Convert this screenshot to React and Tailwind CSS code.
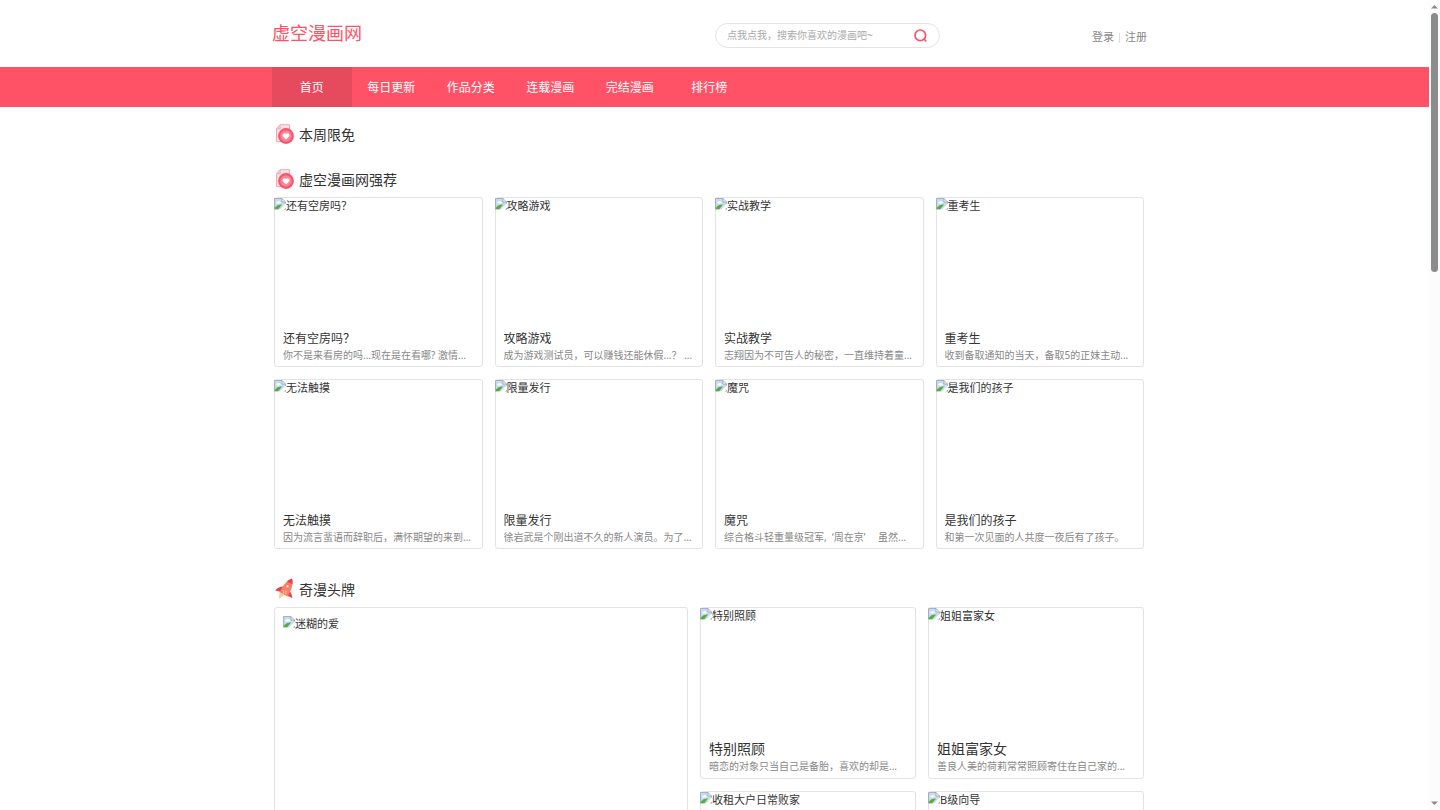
import React from "react";

const NAV = ["首页", "每日更新", "作品分类", "连载漫画", "完结漫画", "排行榜"];

const RECOMMENDED = [
  { title: "还有空房吗？", desc: "你不是来看房的吗...现在是在看哪? 激情..." },
  { title: "攻略游戏", desc: "成为游戏测试员，可以赚钱还能休假...？ ..." },
  { title: "实战教学", desc: "志翔因为不可告人的秘密，一直维持着童..." },
  { title: "重考生", desc: "收到备取通知的当天，备取5的正妹主动..." },
  { title: "无法触摸", desc: "因为流言蜚语而辞职后，满怀期望的来到..." },
  { title: "限量发行", desc: "徐岩武是个刚出道不久的新人演员。为了..." },
  { title: "魔咒", desc: "综合格斗轻重量级冠军,  ‘周在京’　 虽然..." },
  { title: "是我们的孩子", desc: "和第一次见面的人共度一夜后有了孩子。" },
];

const FEATURED = [
  { title: "特别照顾", desc: "暗恋的对象只当自己是备胎，喜欢的却是..." },
  { title: "姐姐富家女", desc: "善良人美的荷莉常常照顾寄住在自己家的..." },
  { title: "收租大户日常败家", desc: "" },
  { title: "B级向导", desc: "" },
];

function BrokenImageIcon() {
  return (
    <svg className="h-3 w-3 shrink-0" viewBox="0 0 12 12" aria-hidden="true">
      <path d="M.5.5h7.500l3.500 3.500v7.500H.5z" fill="#c5daf3" />
      <path d="M2.300 4.800c0-.9.700-1.400 1.400-1.300.5-.9 2.100-.8 2.400.3.900.2.900 1.500 0 1.600H3c-.4 0-.7-.2-.7-.6z" fill="#fff" />
      <path d="M.7 11.300V9.800C2.500 7.500 5 6.300 8 6.500L4.300 11.300z" fill="#56ad3c" />
      <path d="M7.800 11.300 11.300 7.500v3.800z" fill="#56ad3c" />
      <path d="M8 .5V4h3.500z" fill="#fff" />
      <path d="M.5 11.500V.5H8L11.500 4v7.500M8 .5V4h3.500" fill="none" stroke="#9aa3ad" strokeWidth=".8" />
      <path d="M4.800 12.500 12.500 4.800V9L9 12.500z" fill="#fff" />
    </svg>
  );
}

function HeartPageIcon() {
  return (
    <svg className="h-5 w-5 shrink-0" viewBox="0 0 20 20" aria-hidden="true">
      <path d="M5 .7h9.500v17H1.500V4.500z" fill="#ffe3e5" stroke="#f9a3ae" strokeWidth="1" />
      <path d="M1.500 4.700h3.700V.7" fill="#ffc4cb" stroke="#f9a3ae" strokeWidth=".8" />
      <circle cx="11" cy="12" r="7.900" fill="#f7536d" />
      <circle cx="11" cy="12" r="5.800" fill="#fa8596" />
      <path d="M11 15.600 7.900 12.400a2 2 0 0 1 3.100-2.500 2 2 0 0 1 3.100 2.500z" fill="#fff" />
    </svg>
  );
}

function RocketIcon() {
  return (
    <svg className="h-[22px] w-5 shrink-0" viewBox="0 0 20 22" aria-hidden="true">
      <path d="M4.500 14 3.800 21l5.500-4z" fill="#f6cf9d" />
      <path d="M8.500 8.500C5 8.500 2 10 .3 12.500L6 14zM14 12c2 2.500 3.300 5 3.200 8L9.500 16.500z" fill="#ea4350" />
      <path d="M17 .5C11.500 2.500 7.500 7.500 5 14.500l7.500 4C16.500 12.500 18.500 6.500 17 .5z" fill="#fa8069" />
      <path d="M17 .5c-2 .7-3.700 1.900-5.200 3.300l5.700 2.500c.2-2 .1-4-.5-5.800z" fill="#ea4350" />
      <circle cx="12.500" cy="8.200" r="1.500" fill="#fff0dd" stroke="#e9685c" strokeWidth=".6" />
      <path d="m8 12 .8 3.800M11 12.500l-.4 3.800" stroke="#ffc9a9" strokeWidth=".9" />
    </svg>
  );
}

function SectionTitle({ icon, children }) {
  return (
    <h2 className="mb-[2px] flex h-8 items-center gap-1 pl-px text-[14px] text-[#333]">
      {icon}
      {children}
    </h2>
  );
}

function MissingCover({ title }) {
  return (
    <div className="flex" role="img" aria-label={title}>
      <BrokenImageIcon />
      <span className="text-[11px] leading-4 text-[#333]">{title}</span>
    </div>
  );
}

function ComicCard({ title, desc, large }) {
  return (
    <a href="#comic" className="block min-w-0 rounded-[3px] border border-[#e3e3e3] bg-white">
      <div className="-ml-px h-[132px]">
        <MissingCover title={title} />
      </div>
      <div className={large ? "pb-1 pl-2" : "pb-[3px] pl-2"}>
        <h3
          className={
            large
              ? "truncate text-[14px] leading-[18px] text-[#333]"
              : "truncate text-[12px] leading-[17px] text-[#333]"
          }
        >
          {title}
        </h3>
        <p className="h-4 overflow-hidden text-[10px] leading-4 whitespace-pre text-[#888]">{desc}</p>
      </div>
    </a>
  );
}

function Header() {
  return (
    <header>
      <div className="mx-auto flex h-[67px] max-w-[885px] items-center pr-[10px]">
        <h1 className="w-[443px] text-[18px] text-[#ff5267]">
          <a href="#home">虚空漫画网</a>
        </h1>
        <form
          className="mt-1 flex h-[25px] w-[225px] items-center rounded-full border border-[#e3e3e3] pr-3 pl-[11px]"
          onSubmit={(event) => event.preventDefault()}
        >
          <input
            type="text"
            aria-label="搜索漫画"
            placeholder="点我点我，搜索你喜欢的漫画吧~"
            className="min-w-0 flex-1 bg-transparent text-[10px] outline-none placeholder:text-[#aaa]"
          />
          <button type="submit" aria-label="搜索">
            <svg className="h-[13px] w-[13px]" viewBox="0 0 13 13" fill="none" stroke="#ff5267" strokeWidth="1.700">
              <circle cx="6.300" cy="6.300" r="5.300" />
              <path d="m10 10 2.300 2.300" />
            </svg>
          </button>
        </form>
        <div className="mt-2 ml-auto flex items-center text-[11px] text-[#888]">
          <a href="#login">登录</a>
          <span className="mx-[5px] h-[10px] w-px bg-[#ddd]" />
          <a href="#register">注册</a>
        </div>
      </div>
      <nav className="bg-[#ff5267]">
        <div className="mx-auto max-w-[885px]">
          <ul className="grid w-[477px] grid-cols-6 text-center text-[12px] leading-[42px] text-white">
            {NAV.map((label, index) => (
              <li key={label}>
                <a href="#nav" className={index === 0 ? "block h-10 bg-[#e64a5d]" : "block h-10"}>
                  {label}
                </a>
              </li>
            ))}
          </ul>
        </div>
      </nav>
    </header>
  );
}

function ScrollRail() {
  return (
    <div className="flex w-[11px] shrink-0 flex-col items-center bg-[#fcfcfc] py-1" aria-hidden="true">
      <svg className="h-[9px] w-[7px]" viewBox="0 0 7 9">
        <path d="M3.500 1 7 4.500H0z" fill="#8b8b8b" />
      </svg>
      <div className="w-[7px] flex-1">
        <div className="h-[33%] rounded-full bg-[#8b8d8c]" />
      </div>
      <svg className="h-[9px] w-[7px]" viewBox="0 0 7 9">
        <path d="M3.500 8 7 4.500H0z" fill="#8b8b8b" />
      </svg>
    </div>
  );
}

export default function App() {
  return (
    <div className="flex h-screen bg-white font-['Noto_Sans','Noto_Sans_CJK_SC',sans-serif]">
      <div className="min-w-0 flex-1 overflow-y-auto [scrollbar-width:none]">
        <Header />
        <main className="mx-auto max-w-[885px] pr-[13px] pl-[2px]">
          <section className="pt-[11px]">
            <SectionTitle icon={<HeartPageIcon />}>本周限免</SectionTitle>
          </section>
          <section className="pt-[11px]">
            <SectionTitle icon={<HeartPageIcon />}>虚空漫画网强荐</SectionTitle>
            <div className="grid grid-cols-4 gap-3">
              {RECOMMENDED.map((comic) => (
                <ComicCard key={comic.title} {...comic} />
              ))}
            </div>
          </section>
          <section className="pt-6">
            <SectionTitle icon={<RocketIcon />}>奇漫头牌</SectionTitle>
            <div className="flex gap-3">
              <a href="#comic" className="block w-[414px] rounded-[3px] border border-[#e3e3e3] p-2">
                <MissingCover title="迷糊的爱" />
              </a>
              <div className="grid min-w-0 flex-1 grid-cols-2 gap-3">
                {FEATURED.map((comic) => (
                  <ComicCard key={comic.title} {...comic} large />
                ))}
              </div>
            </div>
          </section>
        </main>
      </div>
      <ScrollRail />
    </div>
  );
}
